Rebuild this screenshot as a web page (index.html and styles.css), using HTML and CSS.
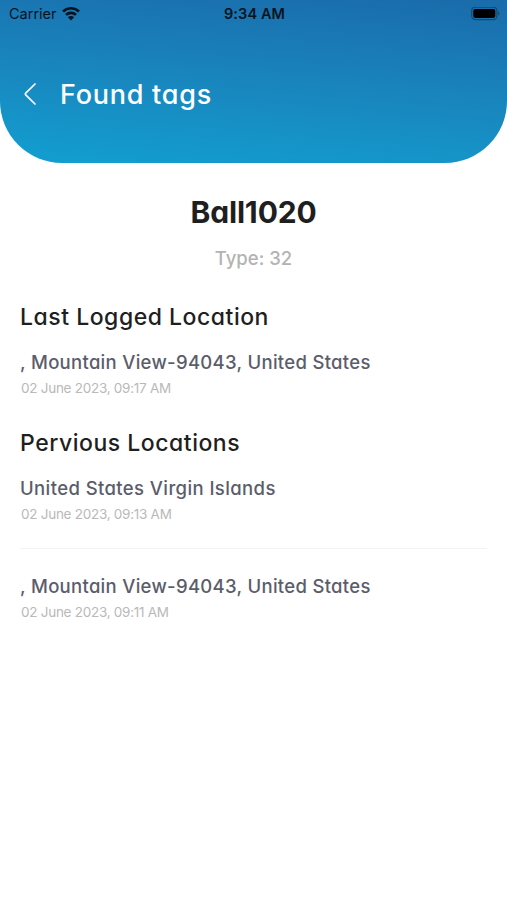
FILE: index.html
```html
<!DOCTYPE html>
<html lang="en">

<head>
    <meta charset="UTF-8">
    <meta name="viewport" content="width=device-width, initial-scale=1.0">
    <title>Found tags</title>
    <link rel="stylesheet" href="styles.css">
</head>

<body>
    <header class="header">
        <!-- Status bar -->
        <div class="status-bar">
            <div class="carrier">
                <span class="carrier-name">Carrier</span>
                <svg class="wifi" width="18" height="14" viewBox="0 0 18 14" fill="none" stroke="#06131d" stroke-width="2.6">
                    <path d="M1 4.5C5.4.2 12.6.2 17 4.5" />
                    <path d="M4 7.9c2.8-2.7 7.2-2.7 10 0" />
                    <path d="M9 13.5 5.9 10.3c1.7-1.6 4.5-1.6 6.2 0z" fill="#06131d" stroke="none" />
                </svg>
            </div>
            <span class="time">9:34 AM</span>
            <svg class="battery" width="29" height="14" viewBox="0 0 29 14">
                <rect x=".7" y=".2" width="25.2" height="12.4" rx="3.6" fill="none" stroke="#06131d" stroke-opacity=".4" stroke-width="1.2" />
                <rect x="2.3" y="1.9" width="22" height="9" rx="1.8" fill="#000" />
                <path d="M27.2 4.3c1.6.7 1.6 3.5 0 4.2z" fill="#06131d" fill-opacity=".45" />
            </svg>
        </div>

        <!-- Navigation -->
        <div class="nav">
            <svg class="back" width="14" height="24" viewBox="0 0 14 24" fill="none" stroke="#fff" stroke-width="1.7" stroke-linecap="round" stroke-linejoin="round">
                <path d="M12 2 2.7 11.1q-.9.9 0 1.8L12 22" />
            </svg>
            <h1 class="title">Found tags</h1>
        </div>
    </header>

    <main class="content">
        <h2 class="tag-name">Ball1020</h2>
        <p class="tag-type">Type: 32</p>

        <section class="section">
            <h3 class="section-title">Last Logged Location</h3>
            <div class="location">
                <p class="place">, Mountain View-94043, United States</p>
                <p class="date">02 June 2023, 09:17 AM</p>
            </div>
        </section>

        <section class="section previous">
            <h3 class="section-title">Pervious Locations</h3>
            <div class="location">
                <p class="place islands">United States Virgin Islands</p>
                <p class="date">02 June 2023, 09:13 AM</p>
            </div>
            <div class="location divided">
                <p class="place">, Mountain View-94043, United States</p>
                <p class="date">02 June 2023, 09:11 AM</p>
            </div>
        </section>
    </main>
</body>

</html>
```

FILE: styles.css
```css
* {
    box-sizing: border-box;
    margin: 0;
    padding: 0;
}

body {
    font-family: Inter, "Open Sans", sans-serif;
    font-feature-settings: "cv11" 1;
    background-color: #fff;
    min-height: 900px;
}

.header {
    height: 163px;
    background: linear-gradient(185deg, #1a6baa 0%, #1985bd 50%, #129fd0 100%);
    border-radius: 0 0 62px 62px;
}

.status-bar {
    display: grid;
    grid-template-columns: 1fr auto 1fr;
    align-items: center;
    height: 27px;
    padding: 0 7px 0 9px;
    color: #06131d;
}

.carrier {
    display: flex;
    align-items: center;
    gap: 5px;
    font-size: 14.5px;
    font-feature-settings: normal;
}

.wifi {
    display: block;
}

.time {
    font-size: 14.5px;
    font-weight: 600;
    letter-spacing: 0.1px;
}

.battery {
    justify-self: end;
}

.nav {
    display: flex;
    align-items: center;
    gap: 23px;
    height: 134px;
    padding-left: 23px;
}

.title {
    padding-top: 1px;
    font-size: 27px;
    font-weight: 500;
    line-height: 40px;
    letter-spacing: 0.75px;
    color: #fff;
}

.content {
    padding: 29px 20px 0;
}

.tag-name {
    font-size: 30px;
    font-weight: 700;
    line-height: 40px;
    text-align: center;
    letter-spacing: -0.15px;
    color: #1f1f1f;
}

.tag-type {
    margin-top: 11px;
    font-size: 18.5px;
    font-weight: 500;
    line-height: 30px;
    text-align: center;
    color: #b3b3b3;
}

.section {
    margin-top: 28px;
}

.previous {
    margin-top: 27px;
}

.section-title {
    font-size: 23px;
    font-weight: 500;
    line-height: 32px;
    letter-spacing: 0.52px;
    color: #1f1f1f;
}

.location {
    padding-top: 15px;
}

.place {
    font-size: 18.5px;
    font-weight: 500;
    line-height: 28px;
    letter-spacing: 0.3px;
    color: #5b5d6b;
}

.islands {
    letter-spacing: 0.4px;
}

.date {
    padding-left: 1px;
    font-size: 13.5px;
    line-height: 24px;
    letter-spacing: -0.27px;
    color: #b9b9b9;
}

.divided {
    margin-top: 22px;
    border-top: 1px solid #f3f3f3;
    padding-top: 23px;
}
```
